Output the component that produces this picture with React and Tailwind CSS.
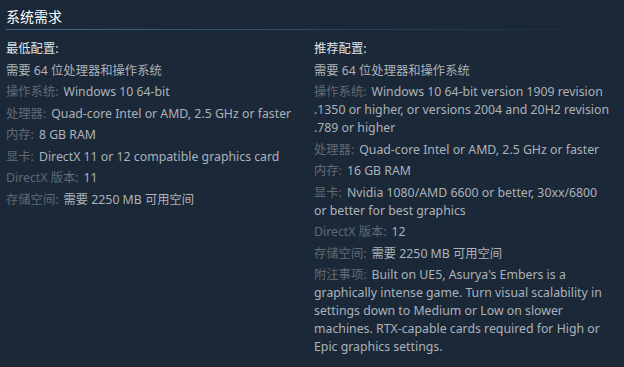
export default function App() {
  const font = { fontFamily: '"Noto Sans", "Noto Sans CJK SC", Arial, sans-serif' };
  const Item = ({ label, children }) => (
    <li className="mb-[3.5px]">
      {label && <span className="text-[#626a73] mr-[5px]">{label}:</span>}
      {children}
    </li>
  );
  return (
    <div className="w-[624px] h-[367px] bg-[#1b2838] overflow-hidden" style={font}>
      <div className="pt-[7px] px-[6px]">
        <h2 className="text-[14px] leading-[20px] text-white font-normal">系统需求</h2>
        <div className="h-px mt-[2px] bg-gradient-to-r from-[#3b6e8c] via-[#2a4a62] to-[#1b2838]" />
        <div className="flex mt-[10px] text-[12.3px] leading-[18px] text-[#acb2b8]">
          <ul className="w-[308px] pr-[14px]">
            <li className="mb-[3.5px] text-[#dfe3e6]">最低配置:</li>
            <li className="mb-[3.5px]">需要 64 位处理器和操作系统</li>
            <Item label="操作系统">Windows 10 64-bit</Item>
            <Item label="处理器">Quad-core Intel or AMD, 2.5 GHz or faster</Item>
            <Item label="内存">8 GB RAM</Item>
            <Item label="显卡">DirectX 11 or 12 compatible graphics card</Item>
            <Item label="DirectX 版本">11</Item>
            <Item label="存储空间">需要 2250 MB 可用空间</Item>
          </ul>
          <ul className="w-[297px]">
            <li className="mb-[3.5px] text-[#dfe3e6]">推荐配置:</li>
            <li className="mb-[3.5px]">需要 64 位处理器和操作系统</li>
            <Item label="操作系统">Windows 10 64-bit version 1909 revision .1350 or higher, or versions 2004 and 20H2 revision .789 or higher</Item>
            <Item label="处理器">Quad-core Intel or AMD, 2.5 GHz or faster</Item>
            <Item label="内存">16 GB RAM</Item>
            <Item label="显卡">Nvidia 1080/AMD 6600 or better, 30xx/6800 or better for best graphics</Item>
            <Item label="DirectX 版本">12</Item>
            <Item label="存储空间">需要 2250 MB 可用空间</Item>
            <Item label="附注事项">Built on UE5, Asurya's Embers is a graphically intense game. Turn visual scalability in settings down to Medium or Low on slower machines. RTX-capable cards required for High or Epic graphics settings.</Item>
          </ul>
        </div>
      </div>
    </div>
  );
}
